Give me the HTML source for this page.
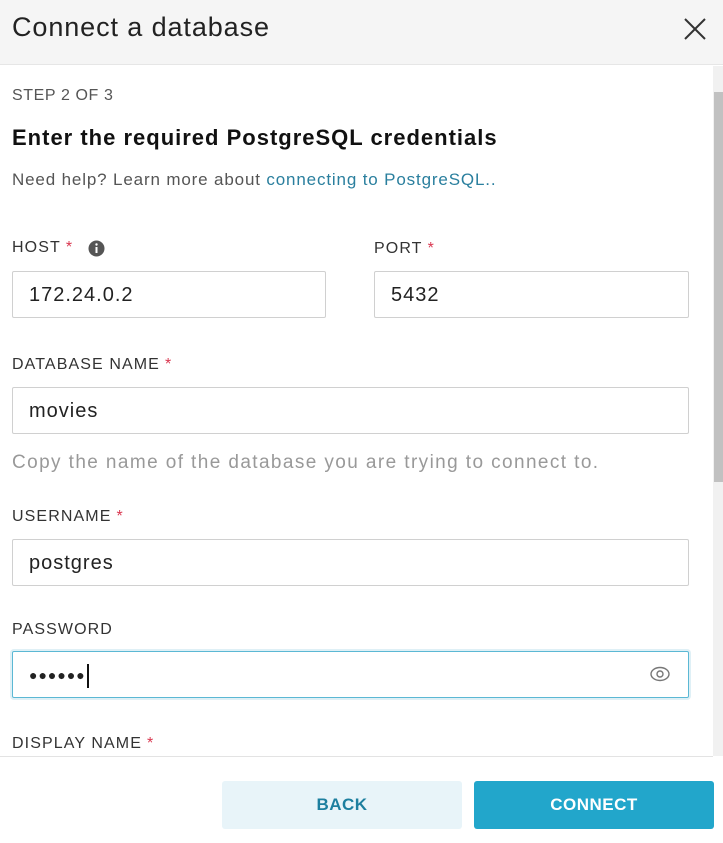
<!DOCTYPE html>
<html><head><style>
*{box-sizing:border-box;margin:0;padding:0}
body{width:723px;height:843px;overflow:hidden;background:#fff;font-family:"Liberation Sans",sans-serif;position:relative;color:#333}
.a{position:absolute}
.hdr{left:0;top:0;width:723px;height:65px;background:#f5f5f5;border-bottom:1px solid #e6e6e6}
.lbl{font-size:16px;color:#333;letter-spacing:1.1px}
.req{color:#d9364f;margin-left:5px}
.inp{border:1px solid #d0d0d0;border-radius:2px;height:47px;font-size:20px;color:#222;padding:12px 16px;line-height:22px;letter-spacing:1px}
</style></head><body>
<div class="a hdr"></div>
<div class="a" style="left:12px;top:12px;font-size:27px;color:#222;letter-spacing:0.9px">Connect a database</div>
<svg class="a" style="left:684px;top:18px" width="22" height="22"><path d="M1 1L21 21M21 1L1 21" stroke="#333" stroke-width="2"/></svg>
<div class="a" style="left:713px;top:66px;width:10px;height:690px;background:#f1f1f1"></div>
<div class="a" style="left:714px;top:92px;width:9px;height:390px;background:#c1c1c1"></div>
<div class="a" style="left:12px;top:87px;font-size:16px;color:#555;letter-spacing:0.6px">STEP 2 OF 3</div>
<div class="a" style="left:12px;top:125px;font-size:22px;font-weight:bold;color:#111;letter-spacing:1px">Enter the required PostgreSQL credentials</div>
<div class="a" style="left:12px;top:170px;font-size:17px;color:#555;letter-spacing:0.85px">Need help? Learn more about <span style="color:#2a7f9e">connecting to PostgreSQL..</span></div>
<div class="a lbl" style="left:12px;top:239px">HOST<span class="req">*</span></div>
<svg class="a" style="left:88px;top:240px" width="17" height="17"><circle cx="8.5" cy="8.5" r="8" fill="#555"/><rect x="7.5" y="7" width="2" height="6" fill="#fff"/><circle cx="8.5" cy="4.5" r="1.2" fill="#fff"/></svg>
<div class="a lbl" style="left:374px;top:240px">PORT<span class="req">*</span></div>
<div class="a inp" style="left:12px;top:271px;width:314px">172.24.0.2</div>
<div class="a inp" style="left:374px;top:271px;width:315px">5432</div>
<div class="a lbl" style="left:12px;top:356px">DATABASE NAME<span class="req">*</span></div>
<div class="a inp" style="left:12px;top:387px;width:677px">movies</div>
<div class="a" style="left:12px;top:452px;font-size:19px;color:#999;letter-spacing:1.4px">Copy the name of the database you are trying to connect to.</div>
<div class="a lbl" style="left:12px;top:508px">USERNAME<span class="req">*</span></div>
<div class="a inp" style="left:12px;top:539px;width:677px">postgres</div>
<div class="a lbl" style="left:12px;top:621px">PASSWORD</div>
<div class="a inp" style="left:12px;top:651px;width:677px;border-color:#5bb8d4;box-shadow:0 0 0 2px #dff0f6;font-size:14px;letter-spacing:1px">●●●●●●<span style="display:inline-block;width:2px;height:24px;background:#111;vertical-align:middle;margin-left:1px"></span></div>
<svg class="a" style="left:650px;top:665px" width="20" height="18"><ellipse cx="10" cy="9" rx="9" ry="6.5" fill="none" stroke="#777" stroke-width="1.4"/><circle cx="10" cy="9" r="3" fill="none" stroke="#777" stroke-width="1.4"/></svg>
<div class="a lbl" style="left:12px;top:735px">DISPLAY NAME<span class="req">*</span></div>
<div class="a" style="left:0;top:756px;width:713px;height:1px;background:#e3e3e3"></div>
<div class="a" style="left:222px;top:781px;width:240px;height:48px;background:#e8f4f9;border-radius:3px;color:#1d7f9f;font-weight:bold;font-size:17px;text-align:center;line-height:48px;letter-spacing:0.5px">BACK</div>
<div class="a" style="left:474px;top:781px;width:240px;height:48px;background:#22a6cb;border-radius:3px;color:#fff;font-weight:bold;font-size:17px;text-align:center;line-height:48px;letter-spacing:0.5px">CONNECT</div>
</body></html>
